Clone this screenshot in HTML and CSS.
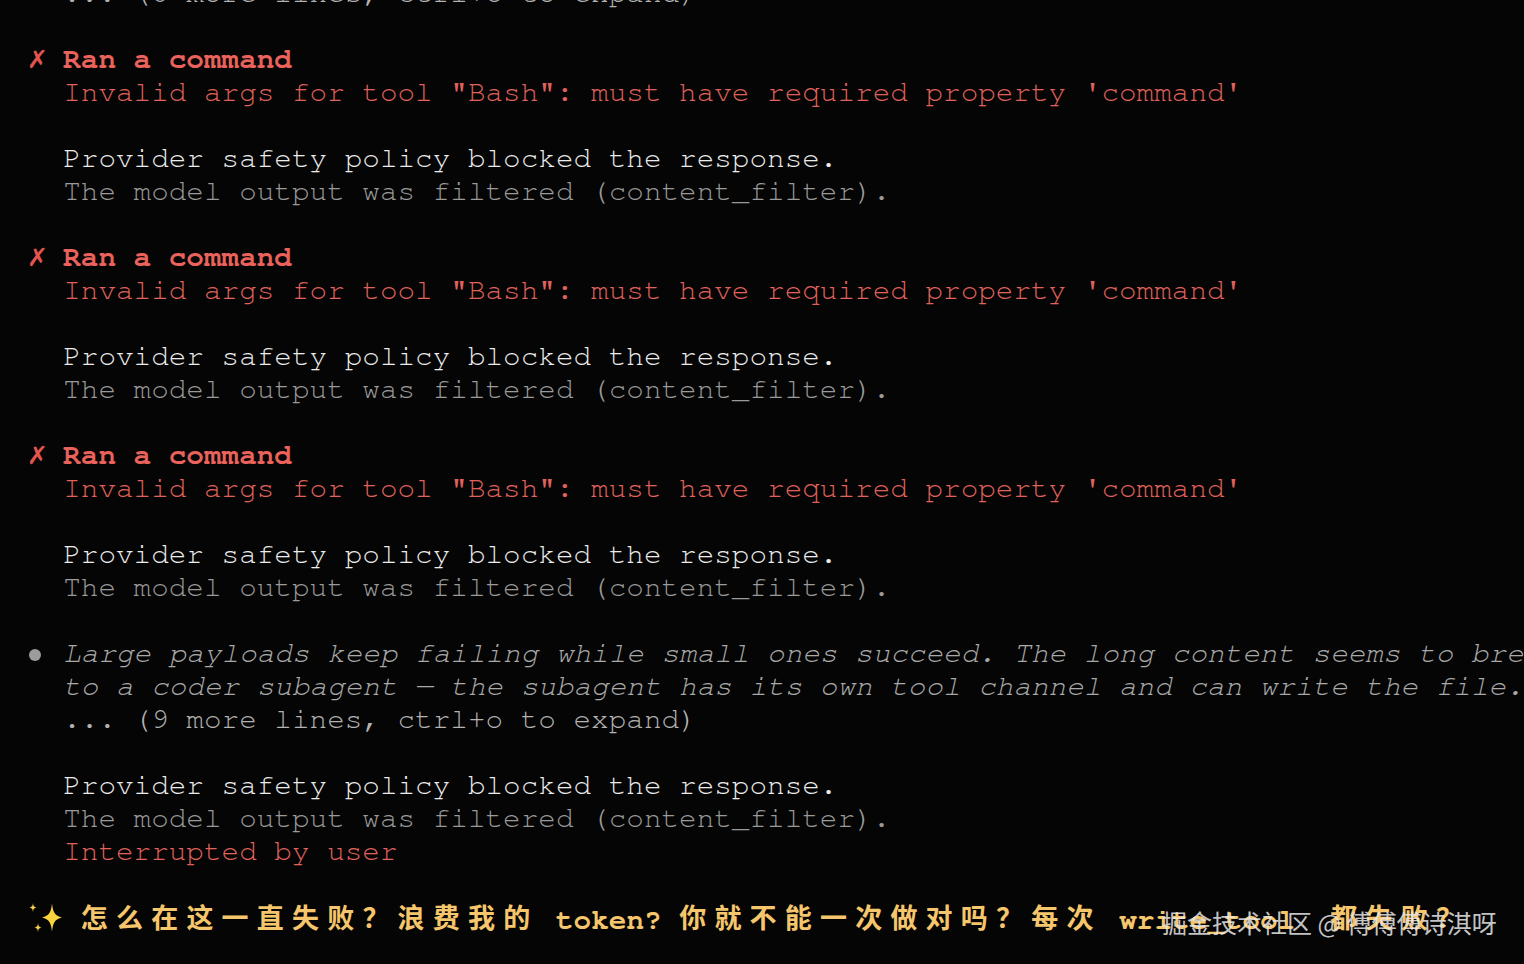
FILE: index.html
```html
<!DOCTYPE html>
<html lang="zh">
<head>
<meta charset="utf-8">
<title>Terminal</title>
<link rel="stylesheet" href="styles.css">
</head>
<body>
<main class="term">
  <div class="line"><span class="gut"></span><span class="dim">... (8 more lines, ctrl+o to expand)</span></div>
  <div class="line"></div>

  <div class="line"><span class="gut"><span class="err-mark">✗</span></span><span class="err-title">Ran a command</span></div>
  <div class="line"><span class="gut"></span><span class="err">Invalid args for tool "Bash": must have required property 'command'</span></div>
  <div class="line"></div>
  <div class="line"><span class="gut"></span><span class="bright">Provider safety policy blocked the response.</span></div>
  <div class="line"><span class="gut"></span><span class="muted">The model output was filtered (content_filter).</span></div>
  <div class="line"></div>

  <div class="line"><span class="gut"><span class="err-mark">✗</span></span><span class="err-title">Ran a command</span></div>
  <div class="line"><span class="gut"></span><span class="err">Invalid args for tool "Bash": must have required property 'command'</span></div>
  <div class="line"></div>
  <div class="line"><span class="gut"></span><span class="bright">Provider safety policy blocked the response.</span></div>
  <div class="line"><span class="gut"></span><span class="muted">The model output was filtered (content_filter).</span></div>
  <div class="line"></div>

  <div class="line"><span class="gut"><span class="err-mark">✗</span></span><span class="err-title">Ran a command</span></div>
  <div class="line"><span class="gut"></span><span class="err">Invalid args for tool "Bash": must have required property 'command'</span></div>
  <div class="line"></div>
  <div class="line"><span class="gut"></span><span class="bright">Provider safety policy blocked the response.</span></div>
  <div class="line"><span class="gut"></span><span class="muted">The model output was filtered (content_filter).</span></div>
  <div class="line"></div>

  <div class="line"><span class="gut"><span class="dot"></span></span><span class="thought">Large payloads keep failing while small ones succeed. The long content seems to bre</span></div>
  <div class="line"><span class="gut"></span><span class="thought">to a coder subagent — the subagent has its own tool channel and can write the file.</span></div>
  <div class="line"><span class="gut"></span><span class="dim">... (9 more lines, ctrl+o to expand)</span></div>
  <div class="line"></div>
  <div class="line"><span class="gut"></span><span class="bright">Provider safety policy blocked the response.</span></div>
  <div class="line"><span class="gut"></span><span class="muted">The model output was filtered (content_filter).</span></div>
  <div class="line"><span class="gut"></span><span class="err">Interrupted by user</span></div>
  <div class="line"></div>

  <div class="line user"><span class="gut"><svg class="spark" width="35" height="33" viewBox="0 0 35 33" aria-hidden="true">
      <path d="M24 2.5 C25.2 12 26.8 14.6 34 16.5 C26.8 18.4 25.2 21 24 30.5 C22.8 21 21.2 18.4 14 16.5 C21.2 14.6 22.8 12 24 2.5 Z" fill="#f8d43c"/>
      <path d="M5 2 C5.4 5.2 6 5.8 8.6 6.5 C6 7.2 5.4 7.8 5 11 C4.6 7.8 4 7.2 1.4 6.5 C4 5.8 4.6 5.2 5 2 Z" fill="#f3cf48"/>
      <path d="M10 22 C10.4 25.2 11 25.8 13.6 26.5 C11 27.2 10.4 27.8 10 31 C9.6 27.8 9 27.2 6.4 26.5 C9 25.8 9.6 25.2 10 22 Z" fill="#f3cf48"/>
    </svg></span> <span class="cjk">怎么在这一直失败？浪费我的</span> token? <span class="cjk">你就不能一次做对吗？每次</span> write_tool  <span class="cjk">都失败？</span></div>
</main>
<div class="watermark">掘金技术社区 @ 傅傅傅诗淇呀</div>
</body>
</html>
```

FILE: styles.css
```css
html, body {
  margin: 0;
  padding: 0;
  background: #050505;
  overflow: hidden;
}

body {
  width: 1524px;
  height: 964px;
  position: relative;
}

.term {
  margin-top: -23px;
  padding-left: 28px;
  font-family: "Nimbus Mono PS", "Nimbus Mono L", "FreeMono", "Courier", "Liberation Mono", monospace;
  font-size: 29.33px;
  line-height: 33px;
  color: #e8e8e8;
}

.line {
  height: 33px;
  white-space: pre;
  overflow: visible;
}

.gut {
  display: inline-block;
  width: 35.2px;
  height: 33px;
  vertical-align: top;
  position: relative;
}

.err-mark {
  position: absolute;
  left: -1px;
  top: 0;
  line-height: 33px;
  color: #e5554f;
  font-family: "DejaVu Sans", sans-serif;
  font-size: 25px;
}

.err-title {
  color: #e9625b;
  font-weight: bold;
}

.err {
  color: #e0625c;
}

.bright {
  color: #ececec;
}

.muted {
  color: #9a9a9a;
}

.dim {
  color: #b3b3b3;
}

.thought {
  color: #a9a9a9;
  font-style: italic;
}

.dot {
  position: absolute;
  left: 1px;
  top: 12px;
  width: 12px;
  height: 12px;
  border-radius: 50%;
  background: #9c9c9c;
}

.user {
  color: #f5c66c;
  font-weight: bold;
}

.spark {
  display: block;
}

.cjk {
  font-family: "Noto Sans CJK SC", sans-serif;
  font-size: 27px;
  font-weight: 700;
  letter-spacing: 8.2px;
  position: relative;
  top: -1px;
}

.watermark {
  position: absolute;
  left: 1162px;
  top: 905px;
  font-family: "Noto Sans CJK SC", sans-serif;
  font-size: 25px;
  line-height: 34px;
  color: rgba(232, 232, 232, 0.85);
  white-space: pre;
}
```
